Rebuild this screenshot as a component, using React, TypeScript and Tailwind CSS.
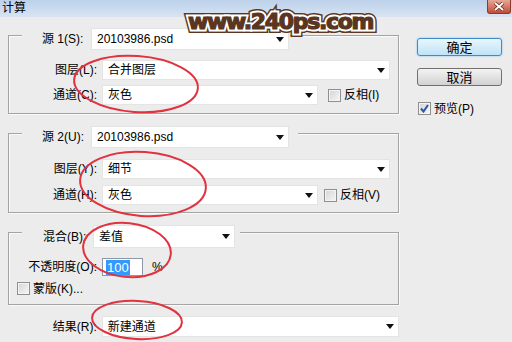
import React from "react";

function Arrow() {
  return (
    <svg width="8" height="5" viewBox="0 0 8 5" className="shrink-0">
      <path d="M0 0h8L4 5z" fill="#111" />
    </svg>
  );
}

function Select({ text, className }: { text: string; className: string }) {
  return (
    <div
      className={`flex items-center justify-between bg-white border border-[#e4e4e4] pl-[5px] pr-[4px] ${className}`}
    >
      <span className="whitespace-nowrap">{text}</span>
      <Arrow />
    </div>
  );
}

function Box({ checked }: { checked?: boolean }) {
  return (
    <div className="w-[13px] h-[13px] shrink-0 border border-[#8e8f8f] bg-linear-to-br from-[#d4d4d4] to-[#f7f7f7] shadow-[inset_0_0_0_1px_#f4f4f4] flex items-center justify-center">
      {checked && (
        <svg width="9" height="9" viewBox="0 0 9 9">
          <path d="M1 4.5l2.5 3L8 1" fill="none" stroke="#2c56a6" strokeWidth="2" />
        </svg>
      )}
    </div>
  );
}

function Row({
  label,
  className,
  children,
}: {
  label: string;
  className: string;
  children: React.ReactNode;
}) {
  return (
    <div className={`flex items-center ${className}`}>
      <span className="w-[88px] text-right whitespace-nowrap">{label}</span>
      {children}
    </div>
  );
}

export default function App() {
  return (
    <div className="relative w-[512px] h-[342px] overflow-hidden bg-[#ececec] text-[12px] leading-none text-black font-['Liberation_Sans','Noto_Sans_CJK_SC',sans-serif]">
      {/* title bar */}
      <div className="h-[17px] flex justify-between bg-linear-to-b from-[#bcd1ea] to-[#d8e4f2]">
        <span className="pl-[2px] pt-[2px] text-[12px]">计算</span>
        <div className="mr-[1px] w-[24px] h-[14px] rounded-b-[3px] border border-t-0 border-[#8b3b2e] bg-linear-to-b from-[#e6a797] to-[#c2493a] flex items-center justify-center">
          <svg width="12" height="9" viewBox="0 0 12 9">
            <path d="M2 1l8 7M10 1l-8 7" stroke="#6a2a20" strokeWidth="3.4" />
            <path d="M2 1l8 7M10 1l-8 7" stroke="#fff" strokeWidth="1.8" />
          </svg>
        </div>
      </div>

      <div className="flex">
        {/* left column */}
        <div className="ml-[8px] w-[391px]">
          <div className="mt-[18px] border border-[#a4a4a4] shadow-[inset_1px_1px_0_#fafafa,1px_1px_0_#fafafa] pb-[8px]">
            <div className="-mt-[8px] ml-[13px] w-fit flex items-center bg-[#ececec] pl-[20px] pr-[1px]">
              <span className="w-[49px] whitespace-nowrap">源 1(S):</span>
              <Select text="20103986.psd" className="w-[198px] h-[22px]" />
            </div>
            <Row label="图层(L):" className="mt-[10px]">
              <Select text="合并图层" className="ml-[5px] w-[288px] h-[20px]" />
            </Row>
            <Row label="通道(C):" className="mt-[5px]">
              <Select text="灰色" className="ml-[5px] w-[216px] h-[20px]" />
              <div className="ml-[10px] flex items-center gap-[3px]">
                <Box />
                <span>反相(I)</span>
              </div>
            </Row>
          </div>

          <div className="mt-[19px] border border-[#a4a4a4] shadow-[inset_1px_1px_0_#fafafa,1px_1px_0_#fafafa] pb-[7px]">
            <div className="-mt-[8px] ml-[13px] w-fit flex items-center bg-[#ececec] pl-[20px] pr-[9px]">
              <span className="w-[49px] whitespace-nowrap">源 2(U):</span>
              <Select text="20103986.psd" className="w-[198px] h-[22px]" />
            </div>
            <Row label="图层(Y):" className="mt-[11px]">
              <Select text="细节" className="ml-[5px] w-[288px] h-[20px]" />
            </Row>
            <Row label="通道(H):" className="mt-[6px]">
              <Select text="灰色" className="ml-[5px] w-[216px] h-[20px]" />
              <div className="ml-[6px] flex items-center gap-[3px]">
                <Box />
                <span>反相(V)</span>
              </div>
            </Row>
          </div>

          <div className="mt-[19px] border border-[#a4a4a4] shadow-[inset_1px_1px_0_#fafafa,1px_1px_0_#fafafa] pb-[9px]">
            <div className="-mt-[8px] ml-[13px] w-fit flex items-center bg-[#ececec] pl-[21px] pr-[5px]">
              <span className="w-[50px] whitespace-nowrap">混合(B):</span>
              <Select text="差值" className="w-[142px] h-[23px]" />
            </div>
            <Row label="不透明度(O):" className="mt-[10px]">
              <div className="ml-[5px] w-[41px] h-[18px] bg-white border border-[#8d97a8] flex items-center pl-[3px]">
                <span className="bg-[#3399ff] text-white text-[13px] px-[1px] py-[1px]">100</span>
              </div>
              <span className="ml-[9px]">%</span>
            </Row>
            <div className="mt-[6px] ml-[8px] flex items-center gap-[3px]">
              <Box />
              <span>蒙版(K)...</span>
            </div>
          </div>

          <div className="mt-[11px] flex items-center">
            <span className="w-[89px] text-right">结果(R):</span>
            <Select text="新建通道" className="ml-[5px] w-[298px] h-[21px]" />
          </div>
        </div>

        {/* right column */}
        <div className="ml-[18px] flex flex-col text-[13px]">
          <div className="mt-[21px] w-[85px] h-[18px] rounded-[3px] border border-[#3c8bcb] bg-linear-to-b from-[#eaf6fd] to-[#bfe3f8] shadow-[0_0_2px_#6cbcf2] flex items-center justify-center">
            确定
          </div>
          <div className="mt-[12px] w-[85px] h-[18px] rounded-[3px] border border-[#707070] bg-linear-to-b from-[#f3f3f3] to-[#d2d2d2] flex items-center justify-center">
            取消
          </div>
          <div className="mt-[16px] ml-[1px] flex items-center gap-[3px] text-[12px]">
            <Box checked />
            <span>预览(P)</span>
          </div>
        </div>
      </div>

      {/* watermark */}
      <div className="absolute left-[188px] top-[11px] font-['DejaVu_Sans',sans-serif] font-bold text-[22px] leading-none tracking-[-1.3px] whitespace-nowrap">
        <span className="absolute inset-0 text-[#5a3520] [-webkit-text-stroke:8px_#5a3520]">www.240ps.com</span>
        <span className="absolute inset-0 text-white [-webkit-text-stroke:5px_#ffffff]">www.240ps.com</span>
        <span className="relative text-[#5a3520] [-webkit-text-stroke:1.2px_#5a3520]">www.240ps.com</span>
      </div>

      {/* red marks */}
      <svg className="absolute inset-0 pointer-events-none" width="512" height="342">
        <g fill="none" stroke="#e0323f" strokeWidth="2">
          <ellipse cx="136" cy="84" rx="62" ry="28" transform="rotate(4 136 84)" />
          <ellipse cx="143" cy="184" rx="63" ry="32" transform="rotate(4 143 184)" />
          <ellipse cx="127" cy="250" rx="44" ry="27" transform="rotate(6 127 250)" />
          <ellipse cx="137" cy="320" rx="45" ry="19" transform="rotate(3 137 320)" />
        </g>
      </svg>
    </div>
  );
}
